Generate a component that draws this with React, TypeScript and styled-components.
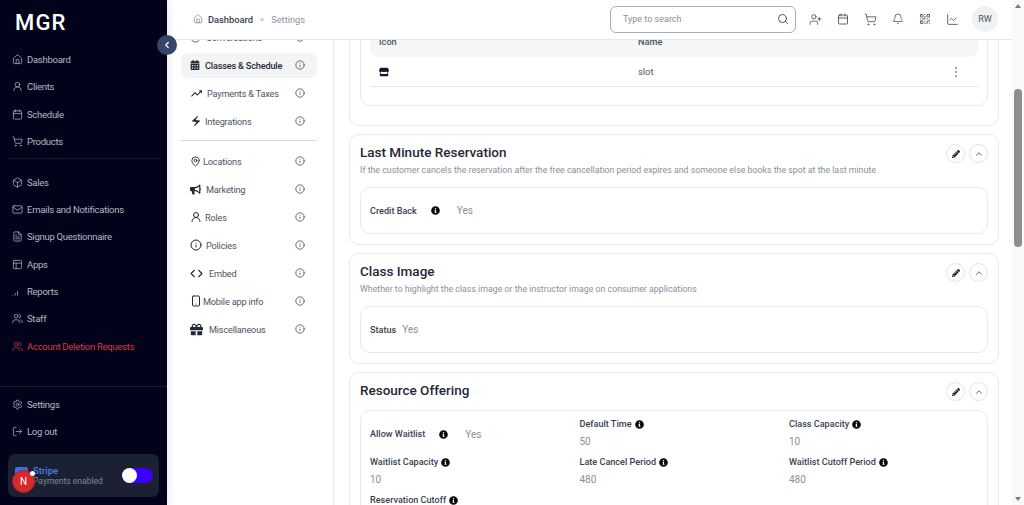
import React from "react";
import styled, { createGlobalStyle } from "styled-components";
import {
  Home,
  UserRound,
  Calendar,
  ShoppingCart,
  Box,
  Mail,
  FileText,
  PanelsTopLeft,
  SignalMedium,
  Users,
  Settings,
  LogOut,
  ChevronLeft,
  ChevronUp,
  Search,
  UserPlus,
  Bell,
  QrCode,
  LineChart,
  Info,
  Code,
  Smartphone,
  MapPin,
  MoreVertical,
} from "lucide-react";
import {
  FaCalendarAlt,
  FaBullhorn,
  FaInfoCircle,
  FaPencilAlt,
  FaGift,
  FaStore,
} from "react-icons/fa";
import { MdTrendingUp, MdElectricBolt } from "react-icons/md";

const GlobalStyle = createGlobalStyle`
  html, body {
    margin: 0;
    padding: 0;
    height: 100%;
    overflow: hidden;
    background: #fff;
    font-family: Roboto, "Noto Sans", sans-serif;
  }
  * { box-sizing: border-box; }
`;

const mainNav = [
  { label: "Dashboard", icon: Home },
  { label: "Clients", icon: UserRound },
  { label: "Schedule", icon: Calendar },
  { label: "Products", icon: ShoppingCart },
];
const secondNav = [
  { label: "Sales", icon: Box },
  { label: "Emails and Notifications", icon: Mail },
  { label: "Signup Questionnaire", icon: FileText },
  { label: "Apps", icon: PanelsTopLeft },
  { label: "Reports", icon: SignalMedium },
  { label: "Staff", icon: Users },
];

const App = () => {
  return (
    <>
      <GlobalStyle />
      <Page>
        <Sidebar>
          <Logo>MGR</Logo>
          <NavGroup>
            {mainNav.map(({ label, icon: Icon }) => (
              <NavItem key={label}>
                <Icon size={11} strokeWidth={1.6} />
                {label}
              </NavItem>
            ))}
          </NavGroup>
          <NavDivider />
          <NavGroup>
            {secondNav.map(({ label, icon: Icon }) => (
              <NavItem key={label}>
                <Icon size={11} strokeWidth={1.6} />
                {label}
              </NavItem>
            ))}
            <NavItem danger>
              <Users size={11} strokeWidth={1.6} />
              Account Deletion Requests
            </NavItem>
          </NavGroup>
          <SidebarBottom>
            <NavGroup>
              <NavItem>
                <Settings size={11} strokeWidth={1.6} />
                Settings
              </NavItem>
              <NavItem>
                <LogOut size={11} strokeWidth={1.6} />
                Log out
              </NavItem>
            </NavGroup>
            <StripeCard>
              <StripeLogo />
              <StripeText>
                <strong>Stripe</strong>
                <span>Payments enabled</span>
              </StripeText>
              <Toggle />
            </StripeCard>
          </SidebarBottom>
          <CollapseButton>
            <ChevronLeft size={10} strokeWidth={3} />
          </CollapseButton>
          <DevBadge>
            N<DevDot />
          </DevBadge>
        </Sidebar>

        <Main>
          <Header>
            <Breadcrumb>
              <Home size={10} strokeWidth={1.5} color="#6b7280" />
              <strong>Dashboard</strong>
              <em>&gt;</em>
              <span>Settings</span>
            </Breadcrumb>
            <SearchBox>
              <span>Type to search</span>
              <Search size={12} strokeWidth={1.8} color="#374151" />
            </SearchBox>
            <HeaderIcons>
              <UserPlus size={13} strokeWidth={1.6} />
              <Calendar size={12} strokeWidth={1.8} />
              <ShoppingCart size={13} strokeWidth={1.6} />
              <Bell size={12} strokeWidth={1.6} />
              <QrCode size={12} strokeWidth={2} />
              <LineChart size={13} strokeWidth={1.6} />
            </HeaderIcons>
            <Avatar>RW</Avatar>
          </Header>

          <Body>
            <SettingsNav>
              <SettingsItem>
                <SettingsLabel>
                  <Info size={11} />
                  Conversations
                </SettingsLabel>
                <Info size={10} strokeWidth={1.8} />
              </SettingsItem>
              <SettingsItem active>
                <SettingsLabel strong gap={5}>
                  <FaCalendarAlt size={10} color="#1f2937" />
                  Classes &amp; Schedule
                </SettingsLabel>
                <Info size={10} strokeWidth={1.8} />
              </SettingsItem>
              <SettingsItem>
                <SettingsLabel gap={4}>
                  <MdTrendingUp size={13} color="#1f2937" />
                  Payments &amp; Taxes
                </SettingsLabel>
                <Info size={10} strokeWidth={1.8} />
              </SettingsItem>
              <SettingsItem>
                <SettingsLabel gap={3}>
                  <MdElectricBolt size={12} color="#1f2937" />
                  Integrations
                </SettingsLabel>
                <Info size={10} strokeWidth={1.8} />
              </SettingsItem>
              <SettingsDivider />
              <SettingsItem>
                <SettingsLabel gap={2}>
                  <MapPin size={11} strokeWidth={2} color="#1f2937" />
                  Locations
                </SettingsLabel>
                <Info size={10} strokeWidth={1.8} />
              </SettingsItem>
              <SettingsItem>
                <SettingsLabel gap={5}>
                  <FaBullhorn size={11} color="#1f2937" />
                  Marketing
                </SettingsLabel>
                <Info size={10} strokeWidth={1.8} />
              </SettingsItem>
              <SettingsItem>
                <SettingsLabel gap={3}>
                  <UserRound size={12} strokeWidth={2} color="#1f2937" />
                  Roles
                </SettingsLabel>
                <Info size={10} strokeWidth={1.8} />
              </SettingsItem>
              <SettingsItem>
                <SettingsLabel gap={4}>
                  <Info size={12} strokeWidth={2} color="#1f2937" />
                  Policies
                </SettingsLabel>
                <Info size={10} strokeWidth={1.8} />
              </SettingsItem>
              <SettingsItem>
                <SettingsLabel gap={6}>
                  <Code size={13} strokeWidth={2} color="#1f2937" />
                  Embed
                </SettingsLabel>
                <Info size={10} strokeWidth={1.8} />
              </SettingsItem>
              <SettingsItem>
                <SettingsLabel gap={1}>
                  <Smartphone size={12} strokeWidth={2} color="#1f2937" />
                  Mobile app info
                </SettingsLabel>
                <Info size={10} strokeWidth={1.8} />
              </SettingsItem>
              <SettingsItem>
                <SettingsLabel gap={6}>
                  <FaGift size={13} color="#1f2937" />
                  Miscellaneous
                </SettingsLabel>
                <Info size={10} strokeWidth={1.8} />
              </SettingsItem>
            </SettingsNav>

            <Content>
              <SlotCard>
                <InnerCard>
                  <TableHead>
                    <span>Icon</span>
                    <span>Name</span>
                  </TableHead>
                  <TableRow>
                    <FaStore size={10} color="#111827" />
                    <span>slot</span>
                    <MoreVertical size={14} color="#9ca3af" />
                  </TableRow>
                </InnerCard>
              </SlotCard>

              <Card>
                <CardHead>
                  <div>
                    <CardTitle>Last Minute Reservation</CardTitle>
                    <CardDesc>
                      If the customer cancels the reservation after the free cancellation period expires and someone else books the spot at the last minute
                    </CardDesc>
                  </div>
                  <CardActions />
                </CardHead>
                <InlineBox>
                  <FieldLabel>Credit Back</FieldLabel>
                  <HelpIcon wide />
                  <InlineValue gap={17}>Yes</InlineValue>
                </InlineBox>
              </Card>

              <Card>
                <CardHead>
                  <div>
                    <CardTitle>Class Image</CardTitle>
                    <CardDesc>Whether to highlight the class image or the instructor image on consumer applications</CardDesc>
                  </div>
                  <CardActions />
                </CardHead>
                <InlineBox>
                  <FieldLabel>Status</FieldLabel>
                  <InlineValue gap={6}>Yes</InlineValue>
                </InlineBox>
              </Card>

              <Card>
                <CardHead short>
                  <CardTitle>Resource Offering</CardTitle>
                  <CardActions />
                </CardHead>
                <FieldGrid>
                  <InlineField>
                    <FieldLabel>Allow Waitlist</FieldLabel>
                    <HelpIcon wide />
                    <InlineValue gap={17}>Yes</InlineValue>
                  </InlineField>
                  <Stat label="Default Time" value="50" />
                  <Stat label="Class Capacity" value="10" />
                  <Stat label="Waitlist Capacity" value="10" />
                  <Stat label="Late Cancel Period" value="480" />
                  <Stat label="Waitlist Cutoff Period" value="480" />
                  <Stat label="Reservation Cutoff" value="60" />
                </FieldGrid>
              </Card>
            </Content>
          </Body>
        </Main>

        <Scrollbar>
          <ArrowUp />
          <Track>
            <Thumb />
          </Track>
          <ArrowDown />
        </Scrollbar>
      </Page>
    </>
  );
};

const CardActions = () => (
  <Actions>
    <RoundButton>
      <FaPencilAlt size={8} color="#111827" />
    </RoundButton>
    <RoundButton>
      <ChevronUp size={10} strokeWidth={2} color="#374151" />
    </RoundButton>
  </Actions>
);

const Stat = ({ label, value }: { label: string; value: string }) => (
  <StatBox>
    <StatLabel>
      <FieldLabel>{label}</FieldLabel>
      <HelpIcon />
    </StatLabel>
    <StatValue>{value}</StatValue>
  </StatBox>
);

export default App;

const Page = styled.div`
  display: flex;
  width: 1024px;
  height: 505px;
  overflow: hidden;
`;

const Sidebar = styled.aside`
  position: relative;
  z-index: 3;
  flex: 0 0 167px;
  display: flex;
  flex-direction: column;
  background: #02021a;
  box-shadow: 2px 0 8px rgba(0, 0, 0, 0.08);
`;

const Logo = styled.div`
  height: 46px;
  padding: 8px 0 0 15px;
  color: #fff;
  font-size: 22px;
  line-height: 29px;
  font-weight: 500;
  letter-spacing: 1.2px;
`;

const NavGroup = styled.nav`
  display: flex;
  flex-direction: column;
`;

const NavItem = styled.div<{ danger?: boolean }>`
  display: flex;
  align-items: center;
  gap: 4px;
  height: 27.3px;
  padding-left: 12px;
  color: ${({ danger }) => (danger ? "#d8394a" : "#b4b9c6")};
  font-size: 9.5px;
  letter-spacing: -0.27px;
  white-space: nowrap;
  svg {
    flex: none;
  }
`;

const NavDivider = styled.div`
  height: 1px;
  margin: 3px 8px 9.5px;
  background: #1a1b2e;
`;

const SidebarBottom = styled.div`
  margin-top: auto;
  border-top: 1px solid #1d1e30;
  padding: 3px 0 8px;
  display: flex;
  flex-direction: column;
`;

const StripeCard = styled.div`
  display: flex;
  align-items: center;
  height: 43px;
  margin: 9px 8px 0;
  padding: 0 6px 0 7px;
  background: #1b2133;
  border-radius: 7px;
`;

const StripeLogo = styled.div`
  flex: none;
  width: 13px;
  height: 11px;
  margin-right: 5px;
  margin-top: -6px;
  background: #3b6fe0;
  border-radius: 2px;
`;

const StripeText = styled.div`
  flex: 1;
  display: flex;
  flex-direction: column;
  font-size: 8.5px;
  line-height: 11px;
  strong {
    color: #4a7de8;
    font-size: 9.5px;
    font-weight: 500;
  }
  span {
    color: #7f8798;
    white-space: nowrap;
  }
`;

const Toggle = styled.div`
  position: relative;
  flex: none;
  width: 31px;
  height: 15px;
  background: #3a00ff;
  border-radius: 8px;
  &::before {
    content: "";
    position: absolute;
    left: 0;
    top: 0;
    width: 15px;
    height: 15px;
    background: #fff;
    border-radius: 50%;
  }
`;

const CollapseButton = styled.div`
  position: absolute;
  top: 35px;
  right: -10px;
  width: 20px;
  height: 20px;
  display: flex;
  align-items: center;
  justify-content: center;
  background: #35466a;
  color: #fff;
  border-radius: 50%;
`;

const DevBadge = styled.div`
  position: absolute;
  left: 12px;
  top: 470px;
  width: 23px;
  height: 23px;
  display: flex;
  align-items: center;
  justify-content: center;
  background: #d42a2a;
  border: 1px solid #b51f1f;
  border-radius: 50%;
  color: #fff;
  font-size: 10px;
`;

const DevDot = styled.span`
  position: absolute;
  right: -1px;
  top: 0;
  width: 5px;
  height: 5px;
  background: #fff;
  border-radius: 50%;
`;

const Main = styled.div`
  flex: 1;
  min-width: 0;
  display: flex;
  flex-direction: column;
`;

const Header = styled.header`
  position: relative;
  z-index: 2;
  flex: 0 0 40px;
  display: flex;
  align-items: center;
  padding: 0 14px 1px 26px;
  background: #fff;
  border-bottom: 1px solid #e5e7eb;
`;

const Breadcrumb = styled.div`
  flex: 1;
  display: flex;
  align-items: center;
  gap: 5px;
  font-size: 9.3px;
  strong {
    color: #374151;
    font-weight: 500;
  }
  em {
    margin: 0 2px;
    color: #9ca3af;
    font-style: normal;
    font-size: 8px;
  }
  span {
    color: #8b93a1;
  }
`;

const SearchBox = styled.div`
  flex: none;
  width: 186px;
  height: 27px;
  display: flex;
  align-items: center;
  justify-content: space-between;
  padding: 0 6px 0 12px;
  border: 1px solid #a8adb6;
  border-radius: 6px;
  color: #8b8f98;
  font-size: 9px;
`;

const HeaderIcons = styled.div`
  display: flex;
  align-items: center;
  gap: 15px;
  margin: 0 13px 0 13px;
  color: #4b5563;
`;

const Avatar = styled.div`
  flex: none;
  width: 26px;
  height: 26px;
  display: flex;
  align-items: center;
  justify-content: center;
  background: #f0f1f3;
  border-radius: 50%;
  color: #4b5563;
  font-size: 9px;
`;

const Body = styled.div`
  flex: 1;
  min-height: 0;
  display: flex;
  overflow: hidden;
`;

const SettingsNav = styled.nav`
  flex: 0 0 167px;
  display: flex;
  flex-direction: column;
  margin-top: -17px;
  padding: 0 16px 0 14px;
  border-right: 1px solid #e5e7eb;
`;

const SettingsItem = styled.div<{ active?: boolean }>`
  flex: none;
  display: flex;
  align-items: center;
  justify-content: space-between;
  height: 25px;
  margin: 1.5px 0;
  padding: 0 12px 0 9px;
  background: ${({ active }) => (active ? "#f3f4f6" : "transparent")};
  border-radius: 7px;
  color: #374151;
  svg {
    flex: none;
  }
`;

const SettingsLabel = styled.span<{ gap?: number; strong?: boolean }>`
  display: flex;
  align-items: center;
  gap: ${({ gap }) => gap ?? 5}px;
  color: ${({ strong }) => (strong ? "#1f2937" : "#4b5563")};
  font-size: 9.2px;
  letter-spacing: -0.2px;
  font-weight: ${({ strong }) => (strong ? 500 : 400)};
  white-space: nowrap;
`;

const SettingsDivider = styled.div`
  flex: none;
  height: 1px;
  margin: 5px 0 6px;
  background: #d9dce1;
`;

const Content = styled.div`
  flex: 1;
  min-width: 0;
  display: flex;
  flex-direction: column;
  gap: 8px;
  padding: 0 13px 0 15px;
`;

const Card = styled.section`
  flex: none;
  padding: 8px 10px 10px;
  background: #fff;
  border: 1px solid #e8e9ec;
  border-radius: 10px;
`;

const SlotCard = styled(Card)`
  height: 126px;
  margin-top: -40px;
  padding-top: 0;
`;

const InnerCard = styled.div`
  height: 105px;
  padding: 0 9px;
  border: 1px solid #e8e9ec;
  border-radius: 10px;
`;

const TableHead = styled.div`
  display: grid;
  grid-template-columns: 259px 1fr;
  align-items: end;
  height: 55px;
  padding: 0 0 10px 9px;
  background: #f5f6f8;
  border-radius: 8px;
  color: #4b5563;
  font-size: 9.2px;
  font-weight: 500;
`;

const TableRow = styled.div`
  display: grid;
  grid-template-columns: 259px 1fr 44px;
  align-items: center;
  justify-items: start;
  height: 30px;
  padding-left: 9px;
  border-bottom: 1px solid #e5e7eb;
  color: #4b5563;
  font-size: 9.4px;
  svg:last-child {
    justify-self: center;
  }
`;

const CardHead = styled.div<{ short?: boolean }>`
  display: flex;
  justify-content: space-between;
  align-items: flex-start;
  height: ${({ short }) => (short ? "29px" : "44px")};
`;

const CardTitle = styled.h3`
  margin: 0;
  color: #1f2937;
  font-size: 13.5px;
  line-height: 18px;
  font-weight: 500;
`;

const CardDesc = styled.p`
  margin: 2px 0 0;
  color: #8a909b;
  font-size: 8.8px;
  line-height: 14px;
  white-space: nowrap;
`;

const Actions = styled.div`
  flex: none;
  display: flex;
  gap: 4px;
  padding-top: 1px;
`;

const RoundButton = styled.div`
  width: 19px;
  height: 19px;
  display: flex;
  align-items: center;
  justify-content: center;
  border: 1px solid #e1e3e7;
  border-radius: 50%;
`;

const InlineBox = styled.div`
  display: flex;
  align-items: center;
  height: 47px;
  padding: 0 9px;
  border: 1px solid #e8e9ec;
  border-radius: 10px;
`;

const FieldLabel = styled.span`
  color: #374151;
  font-size: 9.1px;
  font-weight: 500;
  white-space: nowrap;
`;

const InlineValue = styled.span<{ gap: number }>`
  margin-left: ${({ gap }) => gap}px;
  color: #8a909b;
  font-size: 10px;
`;

const StatValue = styled.span`
  color: #8a909b;
  font-size: 10px;
  line-height: 14px;
`;

const HelpIcon = styled(FaInfoCircle)<{ wide?: boolean }>`
  flex: none;
  width: 9px;
  height: 9px;
  margin-left: ${({ wide }) => (wide ? "14px" : "3px")};
  color: #0b0b0b;
`;

const FieldGrid = styled.div`
  display: grid;
  grid-template-columns: repeat(3, 209.5px);
  grid-auto-rows: 38px;
  padding: 6px 9px 0;
  border: 1px solid #e8e9ec;
  border-radius: 10px;
`;

const InlineField = styled.div`
  display: flex;
  align-items: center;
  height: 34px;
`;

const StatBox = styled.div`
  display: flex;
  flex-direction: column;
  gap: 4px;
`;

const StatLabel = styled.div`
  display: flex;
  align-items: center;
  height: 14px;
`;

const Scrollbar = styled.div`
  position: relative;
  z-index: 2;
  flex: 0 0 12px;
  display: flex;
  flex-direction: column;
  align-items: center;
  background: #fafafa;
`;

const ArrowUp = styled.div`
  flex: none;
  width: 0;
  height: 0;
  margin: 4px 0 3px;
  border: 3.5px solid transparent;
  border-top: 0;
  border-bottom: 4px solid #7a7a7a;
`;

const ArrowDown = styled.div`
  flex: none;
  width: 0;
  height: 0;
  margin: 3px 0 4px;
  border: 3.5px solid transparent;
  border-bottom: 0;
  border-top: 4px solid #7a7a7a;
`;

const Track = styled.div`
  flex: 1;
  width: 100%;
  padding: 78px 2px 0;
`;

const Thumb = styled.div`
  height: 158px;
  background: #8e8e8e;
  border-radius: 4px;
`;
